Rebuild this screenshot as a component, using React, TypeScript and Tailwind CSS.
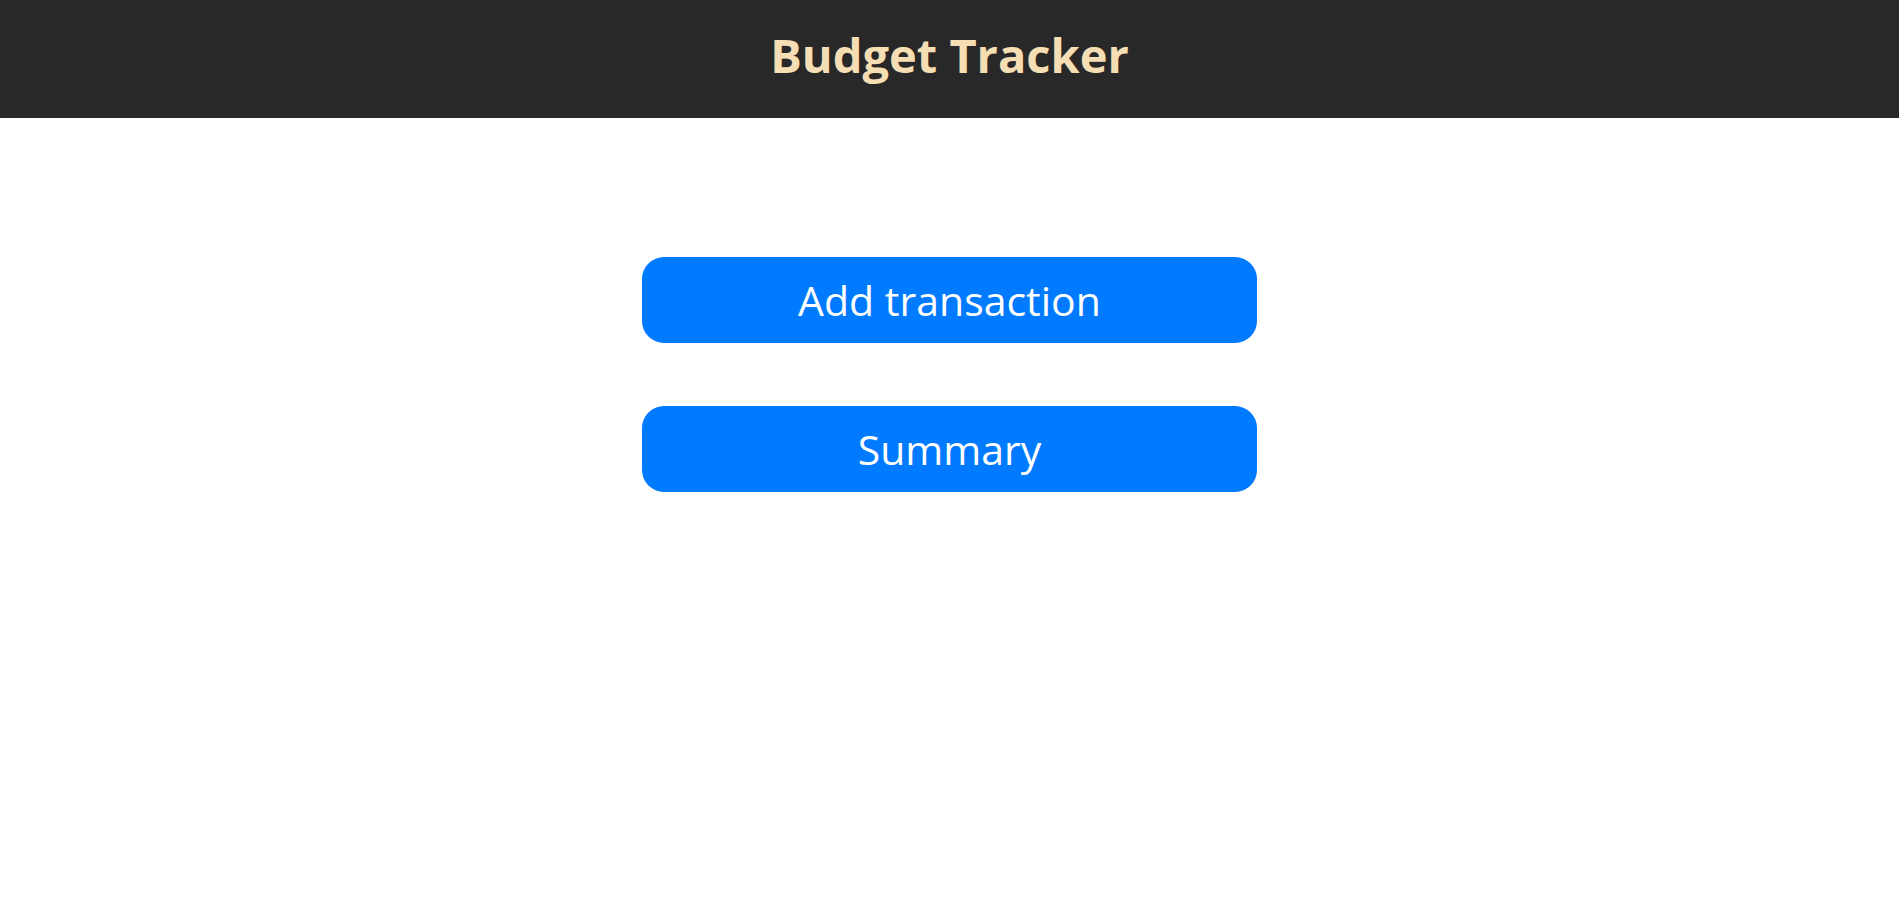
import React from 'react';

const App: React.FC = () => {
  return (
    <div className="min-h-screen bg-white" style={{ fontFamily: '"Open Sans", "Noto Sans", sans-serif' }}>
      <header className="h-[118px] bg-[#282828] flex items-center justify-center">
        <h1 className="text-[47px] font-bold text-[#f5deb3] pb-[8px]">Budget Tracker</h1>
      </header>
      <main className="flex flex-col items-center gap-[63px] pt-[139px]">
        <button className="w-[615px] h-[86px] rounded-[22px] bg-[#007bff] text-white text-[41px] pt-[2px]">
          Add transaction
        </button>
        <button className="w-[615px] h-[86px] rounded-[22px] bg-[#007bff] text-white text-[41px] pt-[2px]">
          Summary
        </button>
      </main>
    </div>
  );
};

export default App;
